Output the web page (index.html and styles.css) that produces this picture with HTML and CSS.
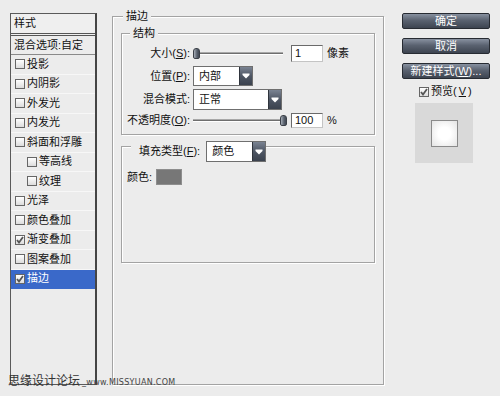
FILE: index.html
```html
<!DOCTYPE html>
<html>
<head>
<meta charset="utf-8">
<title>图层样式 - 描边</title>
<link rel="stylesheet" href="styles.css">
</head>
<body>
<div class="dialog">
  <div class="styles-list">
    <div class="list-head">样式</div>
    <div class="list-blend">混合选项:自定</div>
    <div class="item"><span class="cb"></span>投影</div>
    <div class="item"><span class="cb"></span>内阴影</div>
    <div class="item"><span class="cb"></span>外发光</div>
    <div class="item"><span class="cb"></span>内发光</div>
    <div class="item"><span class="cb"></span>斜面和浮雕</div>
    <div class="item sub"><span class="cb"></span>等高线</div>
    <div class="item sub"><span class="cb"></span>纹理</div>
    <div class="item"><span class="cb"></span>光泽</div>
    <div class="item"><span class="cb"></span>颜色叠加</div>
    <div class="item"><span class="cb checked"><svg width="8" height="8" viewBox="0 0 8 8"><path d="M1 4 L3 6.5 L7 1" fill="none" stroke="#555" stroke-width="1.8"/></svg></span>渐变叠加</div>
    <div class="item"><span class="cb"></span>图案叠加</div>
    <div class="item selected"><span class="cb checked"><svg width="8" height="8" viewBox="0 0 8 8"><path d="M1 4 L3 6.5 L7 1" fill="none" stroke="#555" stroke-width="1.8"/></svg></span>描边</div>
  </div>

  <div class="group main">
    <div class="group-title main-title">描边</div>
    <div class="group struct">
      <div class="group-title struct-title">结构</div>
      <div class="row r1">
        <span class="label">大小(<u>S</u>):</span>
        <div class="slider s-size"><span class="thumb"></span><span class="track"></span></div>
        <span class="input i-size">1</span>
        <span class="unit">像素</span>
      </div>
      <div class="row r2">
        <span class="label">位置(<u>P</u>):</span>
        <div class="select w-pos"><span class="val">内部</span><span class="btn"><svg width="8" height="6" viewBox="0 0 8 6"><path d="M0.5 0.5 H7.5 V2 L4 5.5 L0.5 2 Z" fill="#fff"/></svg></span></div>
      </div>
      <div class="row r3">
        <span class="label">混合模式:</span>
        <div class="select w-mode"><span class="val">正常</span><span class="btn"><svg width="8" height="6" viewBox="0 0 8 6"><path d="M0.5 0.5 H7.5 V2 L4 5.5 L0.5 2 Z" fill="#fff"/></svg></span></div>
      </div>
      <div class="row r4">
        <span class="label">不透明度(<u>O</u>):</span>
        <div class="slider s-op"><span class="track"></span><span class="thumb"></span></div>
        <span class="input i-op">100</span>
        <span class="unit">%</span>
      </div>
    </div>

    <div class="group fill">
      <div class="fill-head">
        <span class="label-f">填充类型(<u>F</u>):</span>
        <div class="select w-fill"><span class="val">颜色</span><span class="btn"><svg width="8" height="6" viewBox="0 0 8 6"><path d="M0.5 0.5 H7.5 V2 L4 5.5 L0.5 2 Z" fill="#fff"/></svg></span></div>
      </div>
      <div class="color-row"><span>颜色:</span><span class="swatch"></span></div>
    </div>
  </div>

  <div class="side">
    <div class="button">确定</div>
    <div class="button">取消</div>
    <div class="button">新建样式(<u>W</u>)...</div>
    <div class="preview-check"><span class="cb checked"><svg width="8" height="8" viewBox="0 0 8 8"><path d="M1 4 L3 6.5 L7 1" fill="none" stroke="#555" stroke-width="1.8"/></svg></span>预览(<u>V</u>)</div>
    <div class="preview"><div class="preview-square"></div></div>
  </div>
</div>
<div class="watermark">思缘设计论坛<span class="wm-url">_www.MISSYUAN.COM</span></div>
</body>
</html>
```

FILE: styles.css
```css
html, body {
  margin: 0;
  padding: 0;
}
body {
  width: 500px;
  height: 396px;
  background: #ececec;
  position: relative;
  overflow: hidden;
  font-family: "Liberation Sans", "Noto Sans CJK SC", sans-serif;
  font-size: 11px;
  line-height: 13px;
  color: #111;
}
u { text-decoration: underline; }

.dialog {
  display: flex;
  align-items: flex-start;
}

/* left list */
.styles-list {
  margin: 13px 0 0 10px;
  width: 87px;
  height: 372px;
  box-sizing: border-box;
  border: 1px solid #5a5a5a;
  border-right: 2px solid #454545;
  background: #ececec;
}
.list-head {
  height: 19px;
  display: flex;
  align-items: center;
  padding-left: 3px;
  border-bottom: 3px double #555;
  background: #efefef;
}
.list-blend {
  height: 18px;
  display: flex;
  align-items: center;
  padding-left: 3px;
  border-bottom: 1px solid #8a8a8a;
}
.item {
  height: 19.5px;
  box-sizing: border-box;
  display: flex;
  align-items: center;
  gap: 2px;
  padding-left: 4px;
  border-bottom: 1px solid #f7f7f7;
}
.item.sub { padding-left: 16px; }
.item.selected {
  background: #3a69c9;
  color: #fff;
  border-bottom-color: #3a69c9;
}
.cb {
  width: 10px;
  height: 10px;
  box-sizing: border-box;
  border: 1px solid #666;
  background: linear-gradient(#ffffff, #dcdcdc);
  display: inline-flex;
  align-items: center;
  justify-content: center;
  flex: none;
}
.cb svg { display: block; }

/* group boxes */
.group {
  box-sizing: border-box;
  border: 1px solid #a3a3a3;
  box-shadow: inset 1px 1px 0 #fff, 1px 1px 0 #fff;
}
.group-title {
  width: max-content;
  height: 13px;
  line-height: 13px;
  padding: 0 3px;
  background: #ececec;
}
.main {
  margin: 16px 0 0 15px;
  width: 272px;
  height: 369px;
  padding: 0 8px;
}
.main-title { margin: -7px 0 0 2px; }
.struct {
  margin-top: 10px;
  padding-bottom: 6px;
}
.struct-title { margin: -7px 0 0 8px; }

.row {
  display: flex;
  align-items: center;
}
.label {
  width: 68px;
  text-align: right;
  margin-right: 3px;
  flex: none;
  white-space: nowrap;
}
.r1 { margin-top: 4px; height: 19px; }
.r2 { margin-top: 3px; height: 20px; }
.r3 { margin-top: 3px; height: 21px; }
.r4 { margin-top: 2px; height: 16px; }

.slider {
  display: flex;
  align-items: center;
  height: 11px;
}
.s-size { width: 90px; }
.s-op { width: 94px; }
.track {
  flex: 1;
  height: 1px;
  background: #6e6e6e;
  border-top: 1px solid #a8a8a8;
  border-bottom: 1px solid #fff;
}
.thumb {
  width: 7px;
  height: 11px;
  box-sizing: border-box;
  border: 1px solid #3b4048;
  border-radius: 3px 3px 2px 2px;
  background: linear-gradient(90deg, #a7aeb8, #59616d 60%, #434a55);
  flex: none;
}
.input {
  box-sizing: border-box;
  width: 32px;
  background: #fff;
  border: 1px solid;
  border-color: #6a6a6a #c4c4c4 #c4c4c4 #6a6a6a;
  padding-left: 3px;
  display: flex;
  align-items: center;
}
.i-size { margin-left: 8px; height: 17px; }
.i-op { margin-left: 4px; height: 15px; }
.unit { margin-left: 4px; }

.select {
  box-sizing: border-box;
  display: flex;
  align-items: stretch;
  background: #fff;
  border: 1px solid #6f6f6f;
}
.select .val {
  flex: 1;
  padding-left: 5px;
  display: flex;
  align-items: center;
}
.select .btn {
  width: 12px;
  background: linear-gradient(#7a8392, #4e5664 50%, #3b424e);
  border-left: 1px solid #2f343c;
  display: flex;
  align-items: center;
  justify-content: center;
}
.w-pos { width: 60px; height: 20px; }
.w-mode { width: 89px; height: 21px; }
.w-fill { width: 60px; height: 21px; }

.fill {
  margin-top: 11px;
  height: 117px;
}
.fill-head {
  width: max-content;
  margin: -6px 0 0 9px;
  padding-left: 8px;
  height: 21px;
  display: flex;
  align-items: center;
  gap: 6px;
  background: #ececec;
}
.color-row {
  margin-top: 7px;
  padding-left: 5px;
  height: 16px;
  display: flex;
  align-items: center;
  gap: 4px;
}
.swatch {
  width: 26px;
  height: 16px;
  box-sizing: border-box;
  background: #777;
  border: 1px solid #8e8e8e;
}

/* right side */
.side {
  margin: 13px 0 0 18px;
  width: 88px;
  display: flex;
  flex-direction: column;
}
.button {
  height: 16px;
  box-sizing: border-box;
  margin-bottom: 9px;
  border: 1px solid #272b32;
  border-radius: 2px;
  background: linear-gradient(#8891a0, #5a6270 45%, #3d4450);
  color: #fff;
  text-align: center;
  line-height: 14px;
  white-space: nowrap;
}
.preview-check {
  margin-top: -2px;
  padding-left: 17px;
  height: 11px;
  display: flex;
  align-items: center;
  gap: 2px;
}
.preview {
  margin: 6px 0 0 13px;
  width: 58px;
  height: 60px;
  background: #d9d9d9;
  display: flex;
  align-items: center;
  justify-content: center;
}
.preview-square {
  width: 27px;
  height: 27px;
  box-sizing: border-box;
  border: 1px solid #8a8a8a;
  background: radial-gradient(circle at 50% 50%, #ffffff 35%, #e4e4e4 100%);
}

/* watermark overlay */
.watermark {
  position: absolute;
  left: 8px;
  top: 373px;
  font-family: "Noto Sans CJK SC", sans-serif;
  font-size: 12px;
  line-height: 14px;
  color: #333;
  white-space: nowrap;
}
.wm-url {
  font-family: "DejaVu Sans", sans-serif;
  font-size: 8px;
  letter-spacing: 0.3px;
  margin-left: 2px;
  color: #444;
}
```
